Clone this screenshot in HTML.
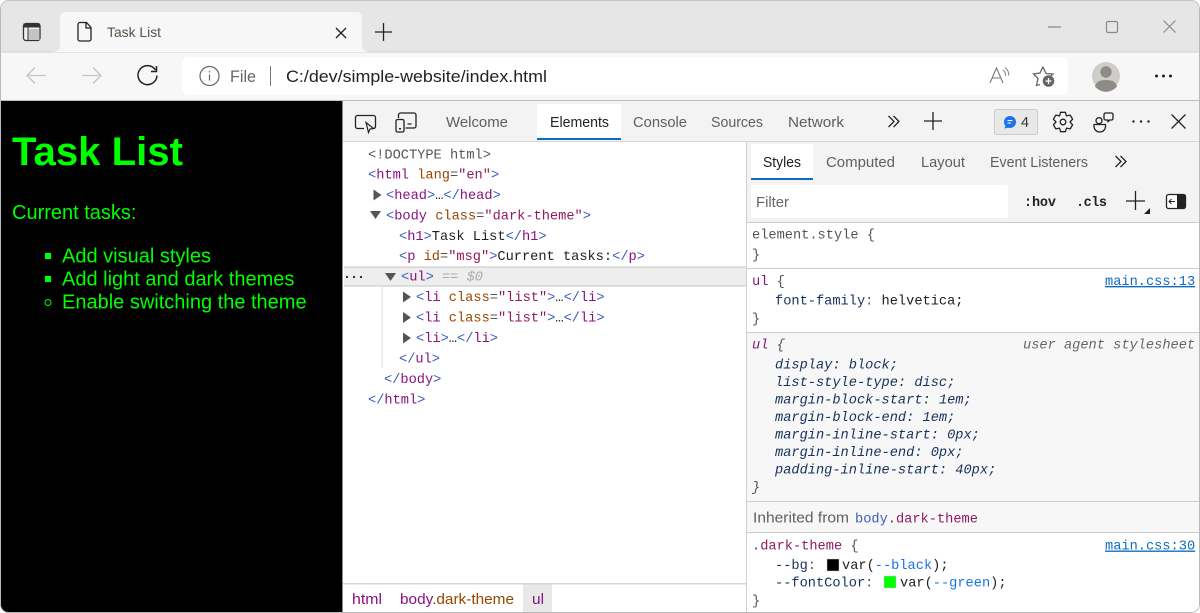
<!DOCTYPE html>
<html><head><meta charset="utf-8"><style>
html,body{margin:0;padding:0;background:#fff;width:1200px;height:613px;overflow:hidden}
svg{display:block}
text{white-space:pre}
.u{font-family:"Liberation Sans",sans-serif;font-size:14.5px;fill:#5f5f5f}
.m{font-family:"Liberation Mono",monospace;font-size:13.67px;fill:#303942}
.i{font-style:italic}
.g{fill:#555}.b{fill:#3d5bbd}.t{fill:#881280}.a{fill:#994500}.v{fill:#8f1a5e}.k{fill:#202020}.p{fill:#16325c}
.l{fill:#0f6cbd;text-decoration:underline}
.s{fill:none;stroke:#222;stroke-width:1.3;stroke-linejoin:round}
</style></head><body>
<svg width="1200" height="613" viewBox="0 0 1200 613" xmlns="http://www.w3.org/2000/svg">
<rect width="1200" height="613" fill="#fff"/>
<!-- chrome -->
<rect x="0" y="0" width="1200" height="52" fill="#e6e6e6"/>
<rect x="0" y="52" width="1200" height="49" fill="#f7f7f7"/>
<rect x="0" y="51.5" width="1200" height="1" fill="#cfcfcf"/>
<path d="M52 52q8 0 8-7V18q0-6 6-6h290q6 0 6 6v27q0 7 8 7z" fill="#f7f7f7"/>
<rect x="182" y="57" width="886" height="38" rx="6" fill="#fff"/>
<rect x="0" y="100" width="1200" height="1" fill="#bdbdbd"/>
<!-- sidebar icon -->
<rect x="23.500" y="23.500" width="16.500" height="17" rx="2.500" fill="#f0f0f0" stroke="#333" stroke-width="1.300"/>
<rect x="23.500" y="23.500" width="16.500" height="4" fill="#333"/>
<rect x="28" y="29" width="11.500" height="11" fill="#c4c4c4"/>
<rect x="27.500" y="27" width="1" height="13" fill="#333"/>
<!-- doc -->
<path d="M80 22.500h6.500l4.500 5v11.500a2 2 0 0 1-2 2h-9a2 2 0 0 1-2-2v-14.500a2 2 0 0 1 2-2zM86 22.500v5.500h5" class="s"/>
<text x="107" y="37" class="u" textLength="54" lengthAdjust="spacingAndGlyphs" style="fill:#5a5046;font-size:14px">Task List</text>
<path d="M336 28l10 10M346 28l-10 10" class="s"/>
<path d="M375 32h17M383.500 23v18" class="s"/>
<!-- window -->
<path d="M1048 27h13" stroke="#8a8a8a" stroke-width="1.300" fill="none"/>
<rect x="1106.500" y="21.500" width="11" height="11" rx="1.500" fill="none" stroke="#8a8a8a" stroke-width="1.200"/>
<path d="M1163.500 20.500l12 12M1175.500 20.500l-12 12" fill="none" stroke="#8a8a8a" stroke-width="1.200"/>
<!-- nav -->
<path d="M27 75.500h19M35 67.500l-8 8 8 8" fill="none" stroke="#c4c4c4" stroke-width="1.300"/>
<path d="M82 75.500h19M93 67.500l8 8-8 8" fill="none" stroke="#c4c4c4" stroke-width="1.300"/>
<path d="M155.500 70a9.500 9.500 0 1 0 1.500 5.500" fill="none" stroke="#222" stroke-width="1.500"/>
<path d="M156.500 66v5.500h-5.500" fill="none" stroke="#222" stroke-width="1.500"/>
<circle cx="209.500" cy="76" r="9.500" fill="none" stroke="#666" stroke-width="1.200"/>
<path d="M209.500 74.500v6M209.500 71v1.500" stroke="#666" stroke-width="1.200"/>
<text x="230" y="82" class="u" style="font-size:16.500px;fill:#666" textLength="26" lengthAdjust="spacingAndGlyphs">File</text>
<rect x="270" y="66" width="1" height="20" fill="#777"/>
<text x="286" y="82" class="u" style="font-size:16.500px;fill:#222" textLength="261" lengthAdjust="spacingAndGlyphs">C:/dev/simple-website/index.html</text>
<!-- read aloud -->
<path d="M990 83l6.500-15 6.500 15M992.500 78h8" fill="none" stroke="#777" stroke-width="1.100"/>
<path d="M1003 70q3 3 2.500 6M1005 67.500q4.500 3.500 3.500 8" fill="none" stroke="#888" stroke-width="1.100"/>
<!-- star -->
<path d="M1043 67l3 6.500 7 .5-5 4.500M1040 84.500l-3.500 1 1.500-7-4.500-4.500 6.500-1 3-6.500" fill="none" stroke="#666" stroke-width="1.300"/>
<circle cx="1048.500" cy="81" r="5.800" fill="#666"/>
<path d="M1045.500 81h6M1048.500 78v6" stroke="#fff" stroke-width="1.300"/>
<!-- avatar -->
<circle cx="1106" cy="76" r="14" fill="#cfcdca"/>
<circle cx="1106" cy="72" r="5.700" fill="#8f8b87"/>
<path d="M1095 86.500c1-5 5-6.500 11-6.500s10 1.500 11 6.500a14 14 0 0 1-22 0z" fill="#8f8b87"/>
<circle cx="1156.500" cy="76" r="1.500" fill="#222"/><circle cx="1163.500" cy="76" r="1.500" fill="#222"/><circle cx="1170.500" cy="76" r="1.500" fill="#222"/>
<!-- page -->
<rect x="0" y="101" width="342" height="512" fill="#000"/>
<rect x="342" y="101" width="1" height="512" fill="#8a8a8a"/>
<text x="12" y="165" font-family="Liberation Sans" font-weight="700" font-size="40" fill="#0f0" textLength="171" lengthAdjust="spacingAndGlyphs">Task List</text>
<text x="12" y="219" font-family="Liberation Sans" font-size="20" fill="#0f0">Current tasks:</text>
<rect x="45" y="253" width="6" height="6" fill="#0f0"/>
<rect x="45" y="276" width="6" height="6" fill="#0f0"/>
<circle cx="48" cy="302.500" r="3" fill="none" stroke="#0f0"/>
<text x="62" y="262.500" font-family="Liberation Sans" font-size="20" fill="#0f0">Add visual styles</text>
<text x="62" y="285.500" font-family="Liberation Sans" font-size="20" fill="#0f0">Add light and dark themes</text>
<text x="62" y="308.500" font-family="Liberation Sans" font-size="20" fill="#0f0">Enable switching the theme</text>
<!-- devtools toolbar -->
<rect x="343" y="101" width="857" height="40" fill="#f3f3f3"/>
<rect x="343" y="141" width="857" height="1" fill="#d6d6d6"/>
<rect x="537" y="104" width="84" height="36" fill="#fff"/>
<rect x="537" y="138" width="84" height="2" fill="#0f6cbd"/>
<path d="M364 128.500h-6.500a2 2 0 0 1-2-2v-9a2 2 0 0 1 2-2h16a2 2 0 0 1 2 2v9a2 2 0 0 1-2 2h-1" class="s"/>
<path d="M366 122.500l7.500 6-3.500.5-1.500 3.500z" fill="#f3f3f3" stroke="#222" stroke-width="1.200"/>
<path d="M398.500 118v-3a2 2 0 0 1 2-2h13.500a2 2 0 0 1 2 2v11a2 2 0 0 1-2 2h-8.500M407.500 124h4" class="s"/>
<rect x="396" y="119.500" width="8" height="12.500" rx="1.500" fill="#f3f3f3" stroke="#222" stroke-width="1.300"/>
<rect x="399" y="128" width="2" height="1.500" fill="#222"/>
<text x="446" y="127" class="u" textLength="62" lengthAdjust="spacingAndGlyphs">Welcome</text>
<text x="550" y="127" class="u" style="fill:#222" textLength="59" lengthAdjust="spacingAndGlyphs">Elements</text>
<text x="633" y="127" class="u" textLength="54" lengthAdjust="spacingAndGlyphs">Console</text>
<text x="711" y="127" class="u" textLength="52" lengthAdjust="spacingAndGlyphs">Sources</text>
<text x="788" y="127" class="u" textLength="56" lengthAdjust="spacingAndGlyphs">Network</text>
<path d="M888.500 116l5.500 5.500-5.500 5.500M893.500 116l5.500 5.500-5.500 5.500" class="s"/>
<path d="M924 121h18M933 112v18" class="s"/>
<rect x="994.500" y="109.500" width="43" height="25" rx="2" fill="#e8e8e8" stroke="#ccc"/>
<circle cx="1010" cy="122" r="6" fill="#1a73e8"/><path d="M1004.500 128.500l1.500-4 3 3z" fill="#1a73e8"/>
<path d="M1007.500 120.500h5M1007.500 123h3.500" stroke="#fff" stroke-width="1"/>
<text x="1021" y="127" class="u" style="fill:#333" textLength="8" lengthAdjust="spacingAndGlyphs">4</text>
<!-- gear -->
<g transform="translate(1063 122)">
<path d="M-2.400-9.700L2.400-9.700 3.500-6.100 7.200-6.900 9.600-2.800 7 0 9.600 2.800 7.200 6.900 3.500 6.100 2.400 9.700-2.400 9.700-3.500 6.100-7.200 6.900-9.600 2.800-7 0-9.600-2.800-7.200-6.900-3.500-6.100z" class="s"/>
<circle cx="0" cy="0" r="2.800" class="s"/>
</g>
<!-- feedback -->
<circle cx="1099" cy="120.700" r="3" class="s"/>
<path d="M1094 124.500h11.500c.5 4.500-2 7.500-5.700 7.500s-6.300-3-5.800-7.500z" class="s"/>
<path d="M1105.500 113h6a1.500 1.500 0 0 1 1.500 1.500v4a1.500 1.500 0 0 1-1.500 1.500h-2l-1.500 2v-2h-2.500a1.500 1.500 0 0 1-1.500-1.500v-4a1.500 1.500 0 0 1 1.500-1.500z" class="s"/>
<circle cx="1133.500" cy="121.500" r="1.200" fill="#222"/><circle cx="1141" cy="121.500" r="1.200" fill="#222"/><circle cx="1148.500" cy="121.500" r="1.200" fill="#222"/>
<path d="M1171.500 114.500l14 14M1185.500 114.500l-14 14" class="s"/>
<!-- elements pane -->
<rect x="746" y="142" width="1" height="471" fill="#d0d0d0"/>
<rect x="344" y="267" width="402" height="19" fill="#eee"/>
<rect x="344" y="266.500" width="402" height="1" fill="#c4c4c4"/>
<rect x="344" y="285.500" width="402" height="1" fill="#c4c4c4"/>
<rect x="381.500" y="286" width="1" height="82" fill="#d6e0f2"/>
<circle cx="347" cy="277" r="1.100" fill="#222"/><circle cx="354" cy="277" r="1.100" fill="#222"/><circle cx="361" cy="277" r="1.100" fill="#222"/>
<text x="368" y="158.500" class="m g">&lt;!DOCTYPE html&gt;</text>
<text x="368" y="178.500" class="m"><tspan class="b">&lt;</tspan><tspan class="t">html</tspan> <tspan class="a">lang</tspan><tspan class="g">=</tspan><tspan class="v">"en"</tspan><tspan class="b">&gt;</tspan></text>
<path d="M373.500 189.500l8 5.500-8 5.500z" fill="#555"/>
<text x="386" y="199" class="m"><tspan class="b">&lt;</tspan><tspan class="t">head</tspan><tspan class="b">&gt;</tspan><tspan class="k">…</tspan><tspan class="b">&lt;/</tspan><tspan class="t">head</tspan><tspan class="b">&gt;</tspan></text>
<path d="M370 211h11l-5.500 8z" fill="#555"/>
<text x="386" y="219.500" class="m"><tspan class="b">&lt;</tspan><tspan class="t">body</tspan> <tspan class="a">class</tspan><tspan class="g">=</tspan><tspan class="v">"dark-theme"</tspan><tspan class="b">&gt;</tspan></text>
<text x="399" y="240" class="m"><tspan class="b">&lt;</tspan><tspan class="t">h1</tspan><tspan class="b">&gt;</tspan><tspan class="k">Task List</tspan><tspan class="b">&lt;/</tspan><tspan class="t">h1</tspan><tspan class="b">&gt;</tspan></text>
<text x="399" y="260" class="m"><tspan class="b">&lt;</tspan><tspan class="t">p</tspan> <tspan class="a">id</tspan><tspan class="g">=</tspan><tspan class="v">"msg"</tspan><tspan class="b">&gt;</tspan><tspan class="k">Current tasks:</tspan><tspan class="b">&lt;/</tspan><tspan class="t">p</tspan><tspan class="b">&gt;</tspan></text>
<path d="M385 273h11l-5.500 8z" fill="#555"/>
<text x="401" y="280.500" class="m"><tspan class="b">&lt;</tspan><tspan class="t">ul</tspan><tspan class="b">&gt;</tspan><tspan class="i" style="fill:#aaa"> == $0</tspan></text>
<path d="M403 291.500l8 5.500-8 5.500z" fill="#555"/>
<text x="416" y="301" class="m"><tspan class="b">&lt;</tspan><tspan class="t">li</tspan> <tspan class="a">class</tspan><tspan class="g">=</tspan><tspan class="v">"list"</tspan><tspan class="b">&gt;</tspan><tspan class="k">…</tspan><tspan class="b">&lt;/</tspan><tspan class="t">li</tspan><tspan class="b">&gt;</tspan></text>
<path d="M403 312l8 5.500-8 5.500z" fill="#555"/>
<text x="416" y="321.500" class="m"><tspan class="b">&lt;</tspan><tspan class="t">li</tspan> <tspan class="a">class</tspan><tspan class="g">=</tspan><tspan class="v">"list"</tspan><tspan class="b">&gt;</tspan><tspan class="k">…</tspan><tspan class="b">&lt;/</tspan><tspan class="t">li</tspan><tspan class="b">&gt;</tspan></text>
<path d="M403 332.500l8 5.500-8 5.500z" fill="#555"/>
<text x="416" y="342" class="m"><tspan class="b">&lt;</tspan><tspan class="t">li</tspan><tspan class="b">&gt;</tspan><tspan class="k">…</tspan><tspan class="b">&lt;/</tspan><tspan class="t">li</tspan><tspan class="b">&gt;</tspan></text>
<text x="399" y="362.500" class="m"><tspan class="b">&lt;/</tspan><tspan class="t">ul</tspan><tspan class="b">&gt;</tspan></text>
<text x="384" y="383" class="m"><tspan class="b">&lt;/</tspan><tspan class="t">body</tspan><tspan class="b">&gt;</tspan></text>
<text x="368" y="403.500" class="m"><tspan class="b">&lt;/</tspan><tspan class="t">html</tspan><tspan class="b">&gt;</tspan></text>
<!-- breadcrumb -->
<rect x="343" y="583" width="403" height="1.500" fill="#d5d5dc"/>
<rect x="523" y="584.500" width="29" height="28.500" fill="#e8e8e8"/>
<text x="352" y="604" class="u" style="fill:#881280" textLength="30" lengthAdjust="spacingAndGlyphs">html</text>
<text x="400" y="604" class="u" textLength="114" lengthAdjust="spacingAndGlyphs"><tspan style="fill:#881280">body</tspan><tspan style="fill:#994500">.dark-theme</tspan></text>
<text x="532" y="604" class="u" style="fill:#881280" textLength="12" lengthAdjust="spacingAndGlyphs">ul</text>
<!-- styles pane -->
<rect x="747" y="142" width="453" height="80" fill="#f3f3f3"/>
<rect x="751" y="144" width="62" height="36" fill="#fff"/>
<rect x="751" y="178" width="62" height="2" fill="#0f6cbd"/>
<text x="763" y="167" class="u" style="fill:#222" textLength="38" lengthAdjust="spacingAndGlyphs">Styles</text>
<text x="826" y="167" class="u" textLength="69" lengthAdjust="spacingAndGlyphs">Computed</text>
<text x="921" y="167" class="u" textLength="44" lengthAdjust="spacingAndGlyphs">Layout</text>
<text x="990" y="167" class="u" textLength="98" lengthAdjust="spacingAndGlyphs">Event Listeners</text>
<path d="M1115.500 156l5.500 5.500-5.500 5.500M1120.500 156l5.500 5.500-5.500 5.500" class="s"/>
<rect x="751" y="185" width="257" height="33" rx="2" fill="#fff"/>
<text x="756" y="207" class="u" style="fill:#666" textLength="33" lengthAdjust="spacingAndGlyphs">Filter</text>
<text x="1024" y="206" class="m" style="fill:#222;font-weight:700;font-size:13.5px" textLength="32">:hov</text>
<text x="1076" y="206" class="m" style="fill:#222;font-weight:700;font-size:13.5px" textLength="31">.cls</text>
<path d="M1126 201h19M1135.500 191v19" class="s"/>
<path d="M1150 208v6h-6z" fill="#222"/>
<rect x="1166.500" y="194.500" width="19" height="14" rx="2" fill="#fff" stroke="#222" stroke-width="1.300"/>
<rect x="1177" y="194.500" width="8.500" height="14" fill="#222"/>
<path d="M1175 201.500h-6M1171.500 199l-2.500 2.500 2.500 2.500" fill="none" stroke="#222" stroke-width="1"/>
<rect x="747" y="222" width="453" height="1" fill="#ccc"/>
<text x="752" y="238.500" class="m g">element.style {</text>
<text x="752" y="258.500" class="m g">}</text>
<rect x="747" y="268" width="453" height="1" fill="#ccc"/>
<text x="752" y="285" class="m"><tspan class="t">ul</tspan><tspan class="g"> {</tspan></text>
<text x="1105" y="285" class="m l">main.css:13</text>
<text x="775" y="304.500" class="m"><tspan class="p">font-family</tspan><tspan class="g">: </tspan><tspan class="k">helvetica;</tspan></text>
<text x="752" y="322.500" class="m g">}</text>
<rect x="747" y="332" width="453" height="169" fill="#f7f7f7"/>
<rect x="747" y="332" width="453" height="1" fill="#ccc"/>
<text x="752" y="348.500" class="m i"><tspan class="t">ul</tspan><tspan class="g"> {</tspan></text>
<text x="1023" y="348.500" class="m i" style="fill:#666">user agent stylesheet</text>
<text x="775" y="368.500" class="m i p">display: block;</text>
<text x="775" y="386" class="m i p">list-style-type: disc;</text>
<text x="775" y="403.500" class="m i p">margin-block-start: 1em;</text>
<text x="775" y="421" class="m i p">margin-block-end: 1em;</text>
<text x="775" y="438.500" class="m i p">margin-inline-start: 0px;</text>
<text x="775" y="456" class="m i p">margin-inline-end: 0px;</text>
<text x="775" y="473.500" class="m i p">padding-inline-start: 40px;</text>
<text x="752" y="491" class="m i g">}</text>
<rect x="747" y="501" width="453" height="32" fill="#f7f7f7"/>
<rect x="747" y="501" width="453" height="1" fill="#ccc"/>
<rect x="747" y="532" width="453" height="1" fill="#ccc"/>
<text x="753" y="522.500" class="u" textLength="96" lengthAdjust="spacingAndGlyphs">Inherited from</text>
<text x="855" y="522.500" class="m"><tspan class="b">body</tspan><tspan class="v">.dark-theme</tspan></text>
<text x="752" y="549.500" class="m"><tspan class="v">.dark-theme</tspan><tspan class="g"> {</tspan></text>
<text x="1105" y="549.500" class="m l">main.css:30</text>
<text x="775" y="569" class="m"><tspan class="p">--bg</tspan><tspan class="g">: </tspan></text>
<rect x="827" y="559" width="12" height="12" fill="#000" stroke="#ccc" stroke-width=".5"/>
<text x="842" y="569" class="m"><tspan class="k">var(</tspan><tspan style="fill:#1a73e8">--black</tspan><tspan class="k">);</tspan></text>
<text x="775" y="586.500" class="m"><tspan class="p">--fontColor</tspan><tspan class="g">: </tspan></text>
<rect x="884" y="576" width="12" height="12" fill="#0f0" stroke="#ccc" stroke-width=".5"/>
<text x="900" y="586.500" class="m"><tspan class="k">var(</tspan><tspan style="fill:#1a73e8">--green</tspan><tspan class="k">);</tspan></text>
<text x="752" y="604.500" class="m g">}</text>
<!-- window frame corners -->
<path d="M0 9a9 9 0 0 1 9-9H1191a9 9 0 0 1 9 9" fill="none" stroke="#b9b9b9" stroke-width="1.500"/>
<path d="M1199.500 9V604a8 8 0 0 1-8 8.500H9a8 8 0 0 1-8.500-8.500V9" fill="none" stroke="#b9b9b9" stroke-width="1"/>
<path d="M0 0h9a9 9 0 0 0-9 9zM1200 0h-9a9 9 0 0 1 9 9zM0 613v-9a9 9 0 0 0 9 9zM1200 613v-9a9 9 0 0 1-9 9z" fill="#fff"/>
</svg>
</body></html>
